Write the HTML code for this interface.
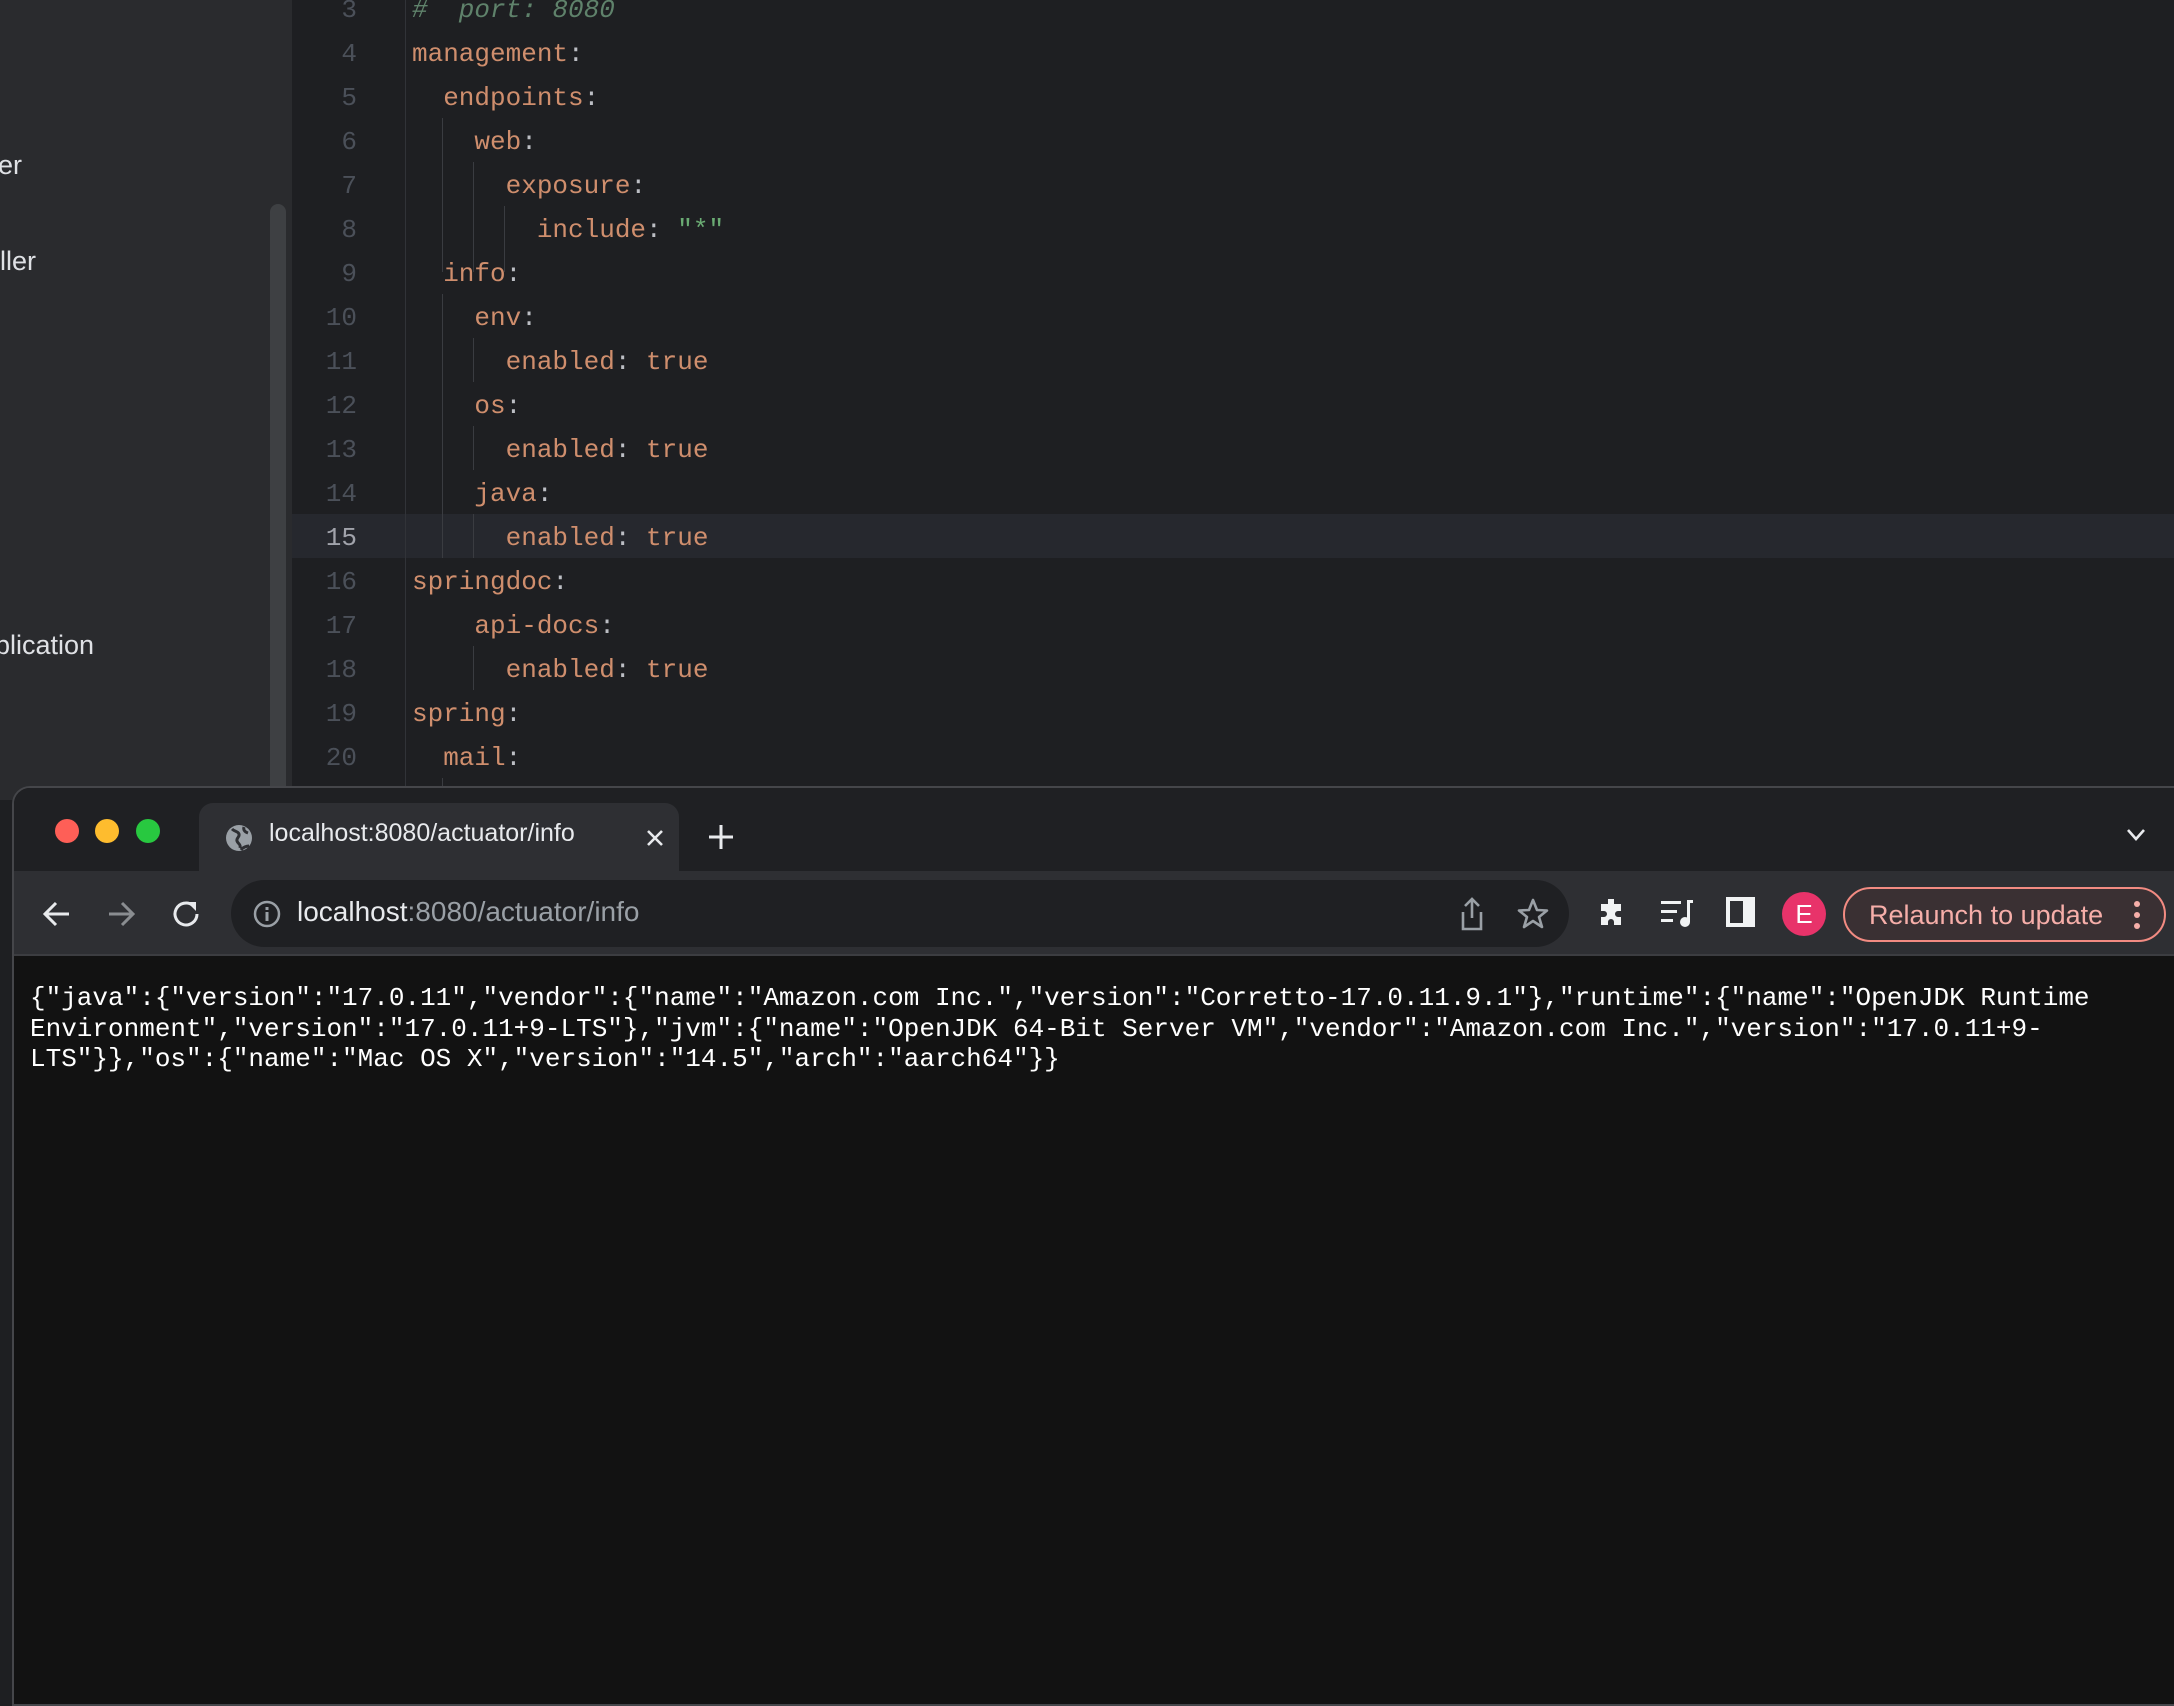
<!DOCTYPE html>
<html><head><meta charset="utf-8"><style>
*{margin:0;padding:0;box-sizing:border-box}
body{width:2174px;height:1692px;overflow:hidden;background:#1e1f22;position:relative;font-family:"Liberation Sans",sans-serif}
.side{position:absolute;left:0;top:0;width:292px;height:800px;background:#2a2b2e}
.side .t{position:absolute;left:0;color:#dfe1e5;font-size:27px}
.side .sb{position:absolute;left:270px;top:204px;width:16px;height:600px;background:#3e4043;border-radius:8px}
.ed{position:absolute;left:292px;top:0;right:0;height:800px;background:#1e1f22;font-family:"Liberation Mono",monospace;font-size:26px}
.ln{position:absolute;left:0;width:65px;text-align:right;color:#4b5059}
.cl{position:absolute;left:120px;color:#cf8e6d;white-space:pre}
.gut{position:absolute;left:113px;top:0;width:1px;height:800px;background:#313338}
.cur{position:absolute;left:0;right:0;top:514px;height:44px;background:#26282e}
.g{position:absolute;width:1px;background:#3a3c41}
.c{color:#bcbec4}
.s{color:#6aab73}
.cm{color:#5f826b;font-style:italic}
.win{position:absolute;left:12px;top:786px;width:2180px;height:920px;background:#121212;border:2px solid #45464a;border-radius:18px 18px 0 0;overflow:hidden}
.tabs{position:absolute;left:0;top:0;right:0;height:83px;background:#1f2023}
.dot{position:absolute;top:31px;width:24px;height:24px;border-radius:50%}
.tab{position:absolute;left:185px;top:15px;width:480px;height:70px;background:#2e2f33;border-radius:14px 14px 0 0}
.tb{position:absolute;left:0;top:83px;right:0;height:85px;background:#2e2f33;border-bottom:2px solid #3c3d41}
.omni{position:absolute;left:217px;top:9px;width:1338px;height:67px;background:#1f2023;border-radius:34px}
.body{position:absolute;left:16px;top:195px;font-family:"Liberation Mono",monospace;font-size:26px;line-height:30.5px;color:#fff;white-space:pre}
</style></head><body>
<div class="side">
<div class="t" style="top:150px;left:-2px">er</div>
<div class="t" style="top:246px;left:0">ller</div>
<div class="t" style="top:630px;left:-5px">plication</div>
<div class="sb"></div>
</div>
<div class="ed">
<div class="cur"></div>
<div class="gut"></div>
<div class="g" style="left:150px;top:118px;height:154px"></div>
<div class="g" style="left:181px;top:162px;height:110px"></div>
<div class="g" style="left:212px;top:206px;height:66px"></div>
<div class="g" style="left:150px;top:294px;height:264px"></div>
<div class="g" style="left:181px;top:338px;height:44px"></div>
<div class="g" style="left:181px;top:426px;height:44px"></div>
<div class="g" style="left:181px;top:514px;height:44px"></div>
<div class="g" style="left:181px;top:646px;height:44px"></div>
<div class="g" style="left:150px;top:778px;height:22px"></div>
<div id="lines"></div>
</div>
<div class="win">
<div class="tabs">
<div class="dot" style="left:41px;background:#fe5f57"></div>
<div class="dot" style="left:81px;background:#febc2e"></div>
<div class="dot" style="left:122px;background:#28c840"></div>
<div class="tab">
<svg style="position:absolute;left:25px;top:20px" width="30" height="30" viewBox="0 0 30 30"><circle cx="15" cy="15" r="13" fill="#9aa0a6"/><path d="M8 6c3 3 6 2 7 5s-3 4-2 7 4 3 3 7M20 4c-1 3 1 5 4 6M17 27c2-3 6-4 8-4" stroke="#2e2f33" stroke-width="3" fill="none"/></svg>
<div style="position:absolute;left:70px;top:16px;font-size:25px;color:#e8eaed">localhost:8080/actuator/info</div>
<svg style="position:absolute;left:447px;top:26px" width="18" height="18"><path d="M2 2L16 16M16 2L2 16" stroke="#e8eaed" stroke-width="2.6"/></svg>
</div>
<svg style="position:absolute;left:694px;top:36px" width="26" height="26"><path d="M13 1V25M1 13H25" stroke="#e8eaed" stroke-width="3"/></svg>
<svg style="position:absolute;left:2112px;top:40px" width="20" height="14"><path d="M2 2L10 11L18 2" stroke="#e8eaed" stroke-width="2.6" fill="none"/></svg>
</div>
<div class="tb">
<svg style="position:absolute;left:28px;top:28px" width="30" height="30"><path d="M27 15H4M14 4L3 15L14 26" stroke="#e8eaed" stroke-width="3" fill="none"/></svg>
<svg style="position:absolute;left:92px;top:28px" width="30" height="30"><path d="M3 15H26M16 4L27 15L16 26" stroke="#8a8d91" stroke-width="3" fill="none"/></svg>
<svg style="position:absolute;left:156px;top:27px" width="32" height="32"><path d="M27 16A11 11 0 1 1 23 7.5" stroke="#e8eaed" stroke-width="3" fill="none"/><path d="M17 4H26V13Z" fill="#e8eaed"/></svg>
<div class="omni">
<svg style="position:absolute;left:22px;top:20px" width="28" height="28"><circle cx="14" cy="14" r="12" stroke="#9aa0a6" stroke-width="2.5" fill="none"/><rect x="12.5" y="12" width="3" height="9" fill="#9aa0a6"/><rect x="12.5" y="7" width="3" height="3" fill="#9aa0a6"/></svg>
<div style="position:absolute;left:66px;top:16px;font-size:28px;color:#e8eaed">localhost<span style="color:#9aa0a6">:8080/actuator/info</span></div>
<svg style="position:absolute;left:1226px;top:16px" width="30" height="36"><path d="M15 3V22M8 10L15 3L22 10M6 16V33H24V16" stroke="#9aa0a6" stroke-width="2.6" fill="none"/></svg>
<svg style="position:absolute;left:1285px;top:17px" width="34" height="34"><path d="M17 3L21 13L31 13.5L23 20L26 30L17 24L8 30L11 20L3 13.5L13 13Z" stroke="#9aa0a6" stroke-width="2.6" fill="none" stroke-linejoin="round"/></svg>
</div>
<svg style="position:absolute;left:1582px;top:26px" width="32" height="32"><path d="M12 2h6v5h7v7h-3a3 3 0 0 0 0 6h3v8h-7v-3a3 3 0 0 0-6 0v3H5v-8h3a3 3 0 0 0 0-6H5V7h7z" fill="#f1f3f4"/></svg>
<svg style="position:absolute;left:1646px;top:26px" width="34" height="32"><rect x="1" y="4" width="20" height="3" fill="#f1f3f4"/><rect x="1" y="13" width="16" height="3" fill="#f1f3f4"/><rect x="1" y="22" width="12" height="3" fill="#f1f3f4"/><rect x="27" y="3" width="3" height="22" fill="#f1f3f4"/><rect x="27" y="3" width="6" height="3" fill="#f1f3f4"/><circle cx="25" cy="25" r="5" fill="#f1f3f4"/></svg>
<svg style="position:absolute;left:1712px;top:26px" width="30" height="32"><rect x="0" y="0" width="29" height="30" fill="#f1f3f4"/><rect x="4" y="4" width="13" height="22" fill="#2e2f33"/></svg>
<div style="position:absolute;left:1768px;top:21px;width:44px;height:44px;border-radius:50%;background:#e8336a;color:#fff;font-size:26px;text-align:center;line-height:44px">E</div>
<div style="position:absolute;left:1829px;top:16px;width:323px;height:55px;border:2px solid #f28b82;border-radius:28px;background:#3a3033">
<div style="position:absolute;left:24px;top:11px;font-size:27px;color:#f6aea9">Relaunch to update</div>
<div style="position:absolute;left:289px;top:12px;width:6px;height:6px;border-radius:50%;background:#f6aea9;box-shadow:0 11px 0 #f6aea9,0 22px 0 #f6aea9"></div>
</div>
</div>
<div class="body">{"java":{"version":"17.0.11","vendor":{"name":"Amazon.com Inc.","version":"Corretto-17.0.11.9.1"},"runtime":{"name":"OpenJDK Runtime
Environment","version":"17.0.11+9-LTS"},"jvm":{"name":"OpenJDK 64-Bit Server VM","vendor":"Amazon.com Inc.","version":"17.0.11+9-
LTS"}},"os":{"name":"Mac OS X","version":"14.5","arch":"aarch64"}}</div>
</div>
<script>
var L=[
[3,'<span class="cm">#  port: 8080</span>'],
[4,'management<span class="c">:</span>'],
[5,'  endpoints<span class="c">:</span>'],
[6,'    web<span class="c">:</span>'],
[7,'      exposure<span class="c">:</span>'],
[8,'        include<span class="c">:</span> <span class="s">"*"</span>'],
[9,'  info<span class="c">:</span>'],
[10,'    env<span class="c">:</span>'],
[11,'      enabled<span class="c">:</span> true'],
[12,'    os<span class="c">:</span>'],
[13,'      enabled<span class="c">:</span> true'],
[14,'    java<span class="c">:</span>'],
[15,'      enabled<span class="c">:</span> true'],
[16,'springdoc<span class="c">:</span>'],
[17,'    api-docs<span class="c">:</span>'],
[18,'      enabled<span class="c">:</span> true'],
[19,'spring<span class="c">:</span>'],
[20,'  mail<span class="c">:</span>']];
var h='';
L.forEach(function(l,i){var t=-5+i*44;
h+='<div class="ln" style="top:'+t+'px;'+(l[0]==15?'color:#a1a3ab':'')+'">'+l[0]+'</div><div class="cl" style="top:'+t+'px">'+l[1]+'</div>';});
document.getElementById('lines').innerHTML=h;
</script>
</body></html>
